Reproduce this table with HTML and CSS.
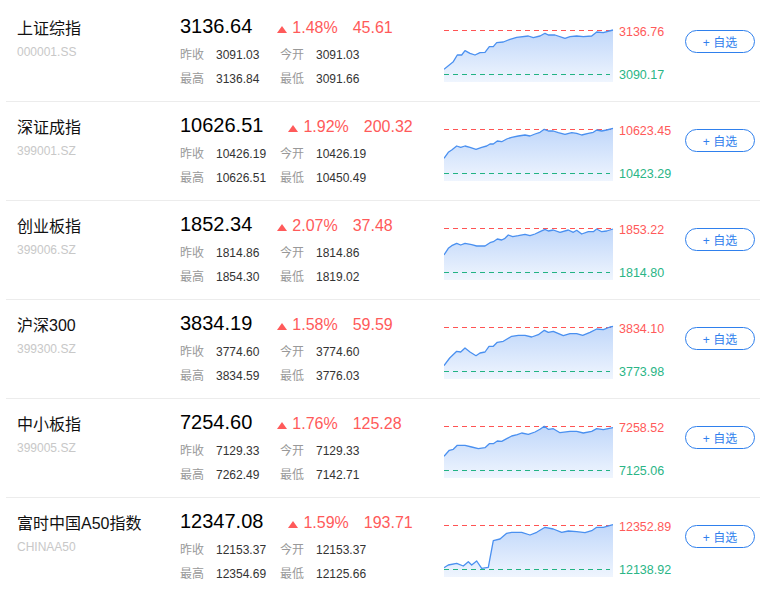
FILE: index.html
```html
<!DOCTYPE html>
<html lang="zh-CN">
<head>
<meta charset="utf-8">
<title>指数</title>
<link rel="stylesheet" href="styles.css">
</head>
<body>
<div class="list">

  <div class="row">
    <div class="name-col"><div class="name">上证综指</div><div class="code">000001.SS</div></div>
    <div class="quote">
      <div class="price-line"><span class="price">3136.64</span><span class="tri"></span><span class="pct">1.48%</span><span class="amt">45.61</span></div>
      <div class="stats">
        <div class="stat-row"><span class="lab">昨收</span><span class="val">3091.03</span><span class="lab">今开</span><span class="val">3091.03</span></div>
        <div class="stat-row"><span class="lab">最高</span><span class="val">3136.84</span><span class="lab">最低</span><span class="val">3091.66</span></div>
      </div>
    </div>
    <svg class="chart" viewBox="0 0 170 56" width="170" height="56">
      <defs><linearGradient id="fillg" x1="0" y1="0" x2="0" y2="1"><stop offset="0" stop-color="#c0d7fa"/><stop offset="1" stop-color="#eff5fe"/></linearGradient></defs>
      <path class="area" d="M0,43.3 L9.3,35.7 13.3,29 17.7,29 21,24.7 26,27.3 31,29 36,26.7 41,26.3 45.3,20.7 49.3,20.7 52.7,16.7 59.3,16 66,13.3 72.7,11.3 84.3,10 89.3,11.7 96,10 101,7.3 104.3,9 111,9 121,12.3 126,10.7 132.7,10 139.3,10.7 147.7,10 152.7,6 159.3,6.7 169,4 L169,56 L0,56 Z"/>
      <line class="dash-hi" x1="0" y1="4.5" x2="169" y2="4.5"/>
      <line class="dash-lo" x1="0" y1="48.5" x2="166" y2="48.5"/>
      <polyline class="line" points="0,43.3 9.3,35.7 13.3,29 17.7,29 21,24.7 26,27.3 31,29 36,26.7 41,26.3 45.3,20.7 49.3,20.7 52.7,16.7 59.3,16 66,13.3 72.7,11.3 84.3,10 89.3,11.7 96,10 101,7.3 104.3,9 111,9 121,12.3 126,10.7 132.7,10 139.3,10.7 147.7,10 152.7,6 159.3,6.7 169,4"/>
    </svg>
    <div class="chart-labels"><div class="hi">3136.76</div><div class="lo">3090.17</div></div>
    <div class="btn">+ 自选</div>
  </div>

  <div class="row">
    <div class="name-col"><div class="name">深证成指</div><div class="code">399001.SZ</div></div>
    <div class="quote">
      <div class="price-line"><span class="price">10626.51</span><span class="tri"></span><span class="pct">1.92%</span><span class="amt">200.32</span></div>
      <div class="stats">
        <div class="stat-row"><span class="lab">昨收</span><span class="val">10426.19</span><span class="lab">今开</span><span class="val">10426.19</span></div>
        <div class="stat-row"><span class="lab">最高</span><span class="val">10626.51</span><span class="lab">最低</span><span class="val">10450.49</span></div>
      </div>
    </div>
    <svg class="chart" viewBox="0 0 170 56" width="170" height="56">
      <path class="area" d="M0,33.3 L4.3,27.3 7.7,25 12.7,21 16.7,22.3 21,21 26,22.3 32,24.3 37.7,22.3 42.7,21 46,19 49.3,19 53.3,16 57.7,16.7 62.7,14 67.7,12.3 74.3,11 81,10 86,11 91,9 96,7.3 100.3,4.3 104.3,6 109.3,6 114.3,7.7 121,9.3 127.7,7.7 132.7,8.3 137.7,10 144.3,8.3 149.3,7.3 152.7,5 157.7,6 162.7,5 169,3.3 L169,56 L0,56 Z"/>
      <line class="dash-hi" x1="0" y1="4.5" x2="169" y2="4.5"/>
      <line class="dash-lo" x1="0" y1="48.5" x2="166" y2="48.5"/>
      <polyline class="line" points="0,33.3 4.3,27.3 7.7,25 12.7,21 16.7,22.3 21,21 26,22.3 32,24.3 37.7,22.3 42.7,21 46,19 49.3,19 53.3,16 57.7,16.7 62.7,14 67.7,12.3 74.3,11 81,10 86,11 91,9 96,7.3 100.3,4.3 104.3,6 109.3,6 114.3,7.7 121,9.3 127.7,7.7 132.7,8.3 137.7,10 144.3,8.3 149.3,7.3 152.7,5 157.7,6 162.7,5 169,3.3"/>
    </svg>
    <div class="chart-labels"><div class="hi">10623.45</div><div class="lo">10423.29</div></div>
    <div class="btn">+ 自选</div>
  </div>

  <div class="row">
    <div class="name-col"><div class="name">创业板指</div><div class="code">399006.SZ</div></div>
    <div class="quote">
      <div class="price-line"><span class="price">1852.34</span><span class="tri"></span><span class="pct">2.07%</span><span class="amt">37.48</span></div>
      <div class="stats">
        <div class="stat-row"><span class="lab">昨收</span><span class="val">1814.86</span><span class="lab">今开</span><span class="val">1814.86</span></div>
        <div class="stat-row"><span class="lab">最高</span><span class="val">1854.30</span><span class="lab">最低</span><span class="val">1819.02</span></div>
      </div>
    </div>
    <svg class="chart" viewBox="0 0 170 56" width="170" height="56">
      <path class="area" d="M0,31 L4.3,24.3 7.7,21.7 12.7,19.3 16.7,21 21,19.3 27.7,20.7 32.7,22 41,22 46,18.7 49.3,17.7 53.3,15 57.7,16 61,14.3 64.3,11 68.7,12.7 74.3,11.7 81,10.3 86,11.7 91,10 96,7.7 101,5.3 104.3,7 109.3,6 116,8.3 124.3,6 129.3,8.3 132.7,6.3 137.7,10 144.3,7.7 149.3,7.7 152.7,5 157.7,7.7 162.7,7 169,5 L169,56 L0,56 Z"/>
      <line class="dash-hi" x1="0" y1="4.5" x2="169" y2="4.5"/>
      <line class="dash-lo" x1="0" y1="48.5" x2="166" y2="48.5"/>
      <polyline class="line" points="0,31 4.3,24.3 7.7,21.7 12.7,19.3 16.7,21 21,19.3 27.7,20.7 32.7,22 41,22 46,18.7 49.3,17.7 53.3,15 57.7,16 61,14.3 64.3,11 68.7,12.7 74.3,11.7 81,10.3 86,11.7 91,10 96,7.7 101,5.3 104.3,7 109.3,6 116,8.3 124.3,6 129.3,8.3 132.7,6.3 137.7,10 144.3,7.7 149.3,7.7 152.7,5 157.7,7.7 162.7,7 169,5"/>
    </svg>
    <div class="chart-labels"><div class="hi">1853.22</div><div class="lo">1814.80</div></div>
    <div class="btn">+ 自选</div>
  </div>

  <div class="row">
    <div class="name-col"><div class="name">沪深300</div><div class="code">399300.SZ</div></div>
    <div class="quote">
      <div class="price-line"><span class="price">3834.19</span><span class="tri"></span><span class="pct">1.58%</span><span class="amt">59.59</span></div>
      <div class="stats">
        <div class="stat-row"><span class="lab">昨收</span><span class="val">3774.60</span><span class="lab">今开</span><span class="val">3774.60</span></div>
        <div class="stat-row"><span class="lab">最高</span><span class="val">3834.59</span><span class="lab">最低</span><span class="val">3776.03</span></div>
      </div>
    </div>
    <svg class="chart" viewBox="0 0 170 56" width="170" height="56">
      <path class="area" d="M0,42.7 L5.7,35 12.7,28.3 16.7,29 21,25 26,29 32,32.7 36,30 41,29 45,23.3 49.3,23.3 53.3,19.3 59.3,18.3 67.7,13.3 74.3,12.3 81,12.3 87.7,14 94.3,11.7 100.3,7.3 104.3,9.3 109.3,8.3 119.3,12.7 126,10.7 132.7,10.7 138.7,12.3 146,9.3 152.7,6 159.3,6.7 166,4 169,3.3 L169,56 L0,56 Z"/>
      <line class="dash-hi" x1="0" y1="4.5" x2="169" y2="4.5"/>
      <line class="dash-lo" x1="0" y1="48.5" x2="166" y2="48.5"/>
      <polyline class="line" points="0,42.7 5.7,35 12.7,28.3 16.7,29 21,25 26,29 32,32.7 36,30 41,29 45,23.3 49.3,23.3 53.3,19.3 59.3,18.3 67.7,13.3 74.3,12.3 81,12.3 87.7,14 94.3,11.7 100.3,7.3 104.3,9.3 109.3,8.3 119.3,12.7 126,10.7 132.7,10.7 138.7,12.3 146,9.3 152.7,6 159.3,6.7 166,4 169,3.3"/>
    </svg>
    <div class="chart-labels"><div class="hi">3834.10</div><div class="lo">3773.98</div></div>
    <div class="btn">+ 自选</div>
  </div>

  <div class="row">
    <div class="name-col"><div class="name">中小板指</div><div class="code">399005.SZ</div></div>
    <div class="quote">
      <div class="price-line"><span class="price">7254.60</span><span class="tri"></span><span class="pct">1.76%</span><span class="amt">125.28</span></div>
      <div class="stats">
        <div class="stat-row"><span class="lab">昨收</span><span class="val">7129.33</span><span class="lab">今开</span><span class="val">7129.33</span></div>
        <div class="stat-row"><span class="lab">最高</span><span class="val">7262.49</span><span class="lab">最低</span><span class="val">7142.71</span></div>
      </div>
    </div>
    <svg class="chart" viewBox="0 0 170 56" width="170" height="56">
      <path class="area" d="M0,34.3 L5.3,28.3 9.3,27.3 13.3,23.3 21,23.3 27.7,25 34.3,26.7 41,25.7 45.3,21.7 49.3,21.7 53.3,19 57.7,19.3 62.7,16.7 67.7,14 73.3,12.7 77.7,11 84.3,12.3 91,10 96,7.3 100.3,4.3 104.3,7.3 109.3,6.7 116,10.7 126,9.3 132.7,9.3 139.3,11 147.7,9.3 152.7,6.7 159.3,7.7 169,5.7 L169,56 L0,56 Z"/>
      <line class="dash-hi" x1="0" y1="4.5" x2="169" y2="4.5"/>
      <line class="dash-lo" x1="0" y1="48.5" x2="166" y2="48.5"/>
      <polyline class="line" points="0,34.3 5.3,28.3 9.3,27.3 13.3,23.3 21,23.3 27.7,25 34.3,26.7 41,25.7 45.3,21.7 49.3,21.7 53.3,19 57.7,19.3 62.7,16.7 67.7,14 73.3,12.7 77.7,11 84.3,12.3 91,10 96,7.3 100.3,4.3 104.3,7.3 109.3,6.7 116,10.7 126,9.3 132.7,9.3 139.3,11 147.7,9.3 152.7,6.7 159.3,7.7 169,5.7"/>
    </svg>
    <div class="chart-labels"><div class="hi">7258.52</div><div class="lo">7125.06</div></div>
    <div class="btn">+ 自选</div>
  </div>

  <div class="row">
    <div class="name-col"><div class="name">富时中国A50指数</div><div class="code">CHINAA50</div></div>
    <div class="quote">
      <div class="price-line"><span class="price">12347.08</span><span class="tri"></span><span class="pct">1.59%</span><span class="amt">193.71</span></div>
      <div class="stats">
        <div class="stat-row"><span class="lab">昨收</span><span class="val">12153.37</span><span class="lab">今开</span><span class="val">12153.37</span></div>
        <div class="stat-row"><span class="lab">最高</span><span class="val">12354.69</span><span class="lab">最低</span><span class="val">12125.66</span></div>
      </div>
    </div>
    <svg class="chart" viewBox="0 0 170 56" width="170" height="56">
      <path class="area" d="M0,46.7 L4.3,44 12.7,42.3 19.3,45 24.3,40.7 27.7,44 32.7,40 37.7,47.3 44.3,46.3 49.3,19.7 56,18 62.7,12.3 67.7,11.3 77.7,11.3 86,14 92.7,11.3 101,6.3 109.3,8 117.7,11.3 124.3,10 132.7,10.7 141,11.7 147.7,9.7 152.7,6.3 159.3,6.3 169,3.7 L169,56 L0,56 Z"/>
      <line class="dash-hi" x1="0" y1="4.5" x2="169" y2="4.5"/>
      <line class="dash-lo" x1="0" y1="48.5" x2="166" y2="48.5"/>
      <polyline class="line" points="0,46.7 4.3,44 12.7,42.3 19.3,45 24.3,40.7 27.7,44 32.7,40 37.7,47.3 44.3,46.3 49.3,19.7 56,18 62.7,12.3 67.7,11.3 77.7,11.3 86,14 92.7,11.3 101,6.3 109.3,8 117.7,11.3 124.3,10 132.7,10.7 141,11.7 147.7,9.7 152.7,6.3 159.3,6.3 169,3.7"/>
    </svg>
    <div class="chart-labels"><div class="hi">12352.89</div><div class="lo">12138.92</div></div>
    <div class="btn">+ 自选</div>
  </div>

</div>
</body>
</html>
```

FILE: styles.css
```css
html, body {
  margin: 0;
  padding: 0;
  background: #fff;
}
body {
  font-family: "Liberation Sans", Arial, "Noto Sans CJK SC", sans-serif;
  color: #333;
}
.list {
  margin-left: 6px;
  width: 754px;
  padding-top: 3px;
}
.row {
  display: flex;
  height: 98px;
  border-bottom: 1px solid #ececec;
}
.name-col {
  width: 163px;
  padding-left: 11px;
  padding-top: 16px;
}
.name {
  font-size: 16px;
  line-height: 20px;
  color: #111;
  white-space: nowrap;
}
.code {
  margin-top: 3px;
  font-size: 12px;
  line-height: 20px;
  color: #c8c8c8;
}
.quote {
  width: 264px;
  padding-top: 10px;
}
.price-line {
  display: flex;
  align-items: baseline;
  height: 26px;
}
.price {
  font-size: 20px;
  line-height: 26px;
  color: #000;
}
.tri {
  display: inline-block;
  width: 0;
  height: 0;
  margin-left: 25px;
  margin-bottom: 3px;
  border-left: 5px solid transparent;
  border-right: 5px solid transparent;
  border-bottom: 7px solid #ff5a5a;
}
.pct, .amt {
  font-size: 16px;
  color: #ff5a5a;
}
.pct {
  margin-left: 5px;
}
.amt {
  margin-left: 15px;
}
.stats {
  margin-top: 4px;
}
.stat-row {
  display: flex;
  font-size: 12px;
  line-height: 24px;
}
.lab {
  width: 36px;
  color: #999;
}
.val {
  width: 64px;
  color: #333;
}
.chart {
  display: block;
  margin-top: 23px;
  width: 170px;
  height: 56px;
  flex: none;
}
.area {
  fill: url(#fillg);
}
.line {
  fill: none;
  stroke: #4a90f0;
  stroke-width: 1.3;
  stroke-linejoin: round;
}
.dash-hi, .dash-lo {
  stroke-width: 1;
  stroke-dasharray: 5 4;
}
.dash-hi {
  stroke: #ff5454;
}
.dash-lo {
  stroke: #22b383;
}
.chart-labels {
  margin-left: 5px;
  width: 66px;
  font-size: 12.5px;
}
.hi {
  margin-top: 21px;
  line-height: 16px;
  color: #ff5a5a;
}
.lo {
  margin-top: 27px;
  line-height: 16px;
  color: #2ab586;
}
.btn {
  margin-top: 27px;
  width: 70px;
  height: 23px;
  box-sizing: border-box;
  border: 1px solid #2f80ed;
  border-radius: 12px;
  color: #2f80ed;
  font-size: 12px;
  display: flex;
  align-items: center;
  justify-content: center;
}
```
